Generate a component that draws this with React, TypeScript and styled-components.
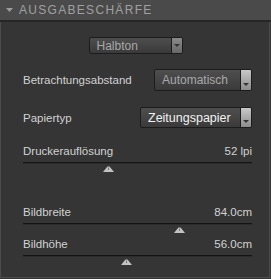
import React from 'react'
import styled, { createGlobalStyle } from 'styled-components'

const GlobalStyle = createGlobalStyle`
html, body {
    margin: 0;
    padding: 0;
    background: #353535;
}
`

const Panel = styled.div`
width: 271px;
height: 279px;
box-sizing: border-box;
background: #353535;
font-family: "Liberation Sans", Arial, sans-serif;
display: flex;
flex-direction: column;
overflow: hidden;
`

const Header = styled.div`
height: 20px;
background: #4a4a4a;
border-bottom: 2px solid #262626;
display: flex;
align-items: center;
padding-left: 6px;
gap: 6px;
`

const HeaderTitle = styled.span`
color: #a0a0a0;
font-size: 12px;
letter-spacing: 1.3px;
`

const Body = styled.div`
flex: 1;
border: 1px solid #4c4c4c;
border-top: none;
margin: 0 1px 1px 0;
padding: 15px 17px 0 22px;
display: flex;
flex-direction: column;
`

const Center = styled.div`
display: flex;
justify-content: center;
padding-right: 4px;
`

const Row = styled.div<{ mt: number }>`
display: flex;
align-items: center;
justify-content: space-between;
margin-top: ${p => p.mt}px;
`

const Label = styled.span`
color: #d2d2d2;
font-size: 11.5px;
`

const Select = styled.div<{ w: number; h: number }>`
width: ${p => p.w}px;
height: ${p => p.h}px;
box-sizing: border-box;
border: 1px solid #1c1c1c;
border-radius: 2px;
display: flex;
overflow: hidden;
background: linear-gradient(#4e4e4e, #3a3a3a);
`

const SelectText = styled.span<{ bright?: boolean }>`
flex: 1;
display: flex;
align-items: center;
padding-left: 7px;
color: ${p => (p.bright ? '#f2f2f2' : '#a8a8a8')};
font-size: ${p => (p.bright ? '12.5px' : '12px')};
`

const Arrow = styled.span<{ light?: boolean }>`
width: 11px;
border-left: 1px solid #1c1c1c;
background: ${p => (p.light ? 'linear-gradient(#c8c8c8, #8c8c8c)' : 'linear-gradient(#8a8a8a, #686868)')};
display: flex;
align-items: ${p => (p.light ? 'flex-end' : 'center')};
justify-content: center;
padding-bottom: ${p => (p.light ? '4px' : '0')};
box-sizing: border-box;
`

const ArrowGlyph = styled.span`
width: 0;
height: 0;
border-left: 3px solid transparent;
border-right: 3px solid transparent;
border-top: 3px solid #333;
`

const SliderBlock = styled.div<{ mt: number }>`
margin-top: ${p => p.mt}px;
display: flex;
flex-direction: column;
`

const SliderHead = styled.div`
display: flex;
justify-content: space-between;
align-items: baseline;
`

const Value = styled.span`
color: #d2d2d2;
font-size: 11.5px;
`

const Track = styled.div`
margin-top: 5px;
height: 1px;
background: #141414;
border-bottom: 1px solid #2c2c2c;
`

const ThumbRow = styled.div`
position: relative;
height: 8px;
`

const Thumb = styled.svg`
position: absolute;
top: 2px;
margin-left: -5px;
`

const Caret = () => (
    <svg width="7" height="4" viewBox="0 0 7 4">
        <path d="M0 0 L7 0 L3.5 4 Z" fill="#9c9c9c" />
    </svg>
)

const Slider: React.FC<{ label: string; value: string; pos: number; mt: number }> = ({ label, value, pos, mt }) => (
    <SliderBlock mt={mt}>
        <SliderHead>
            <Label>{label}</Label>
            <Value>{value}</Value>
        </SliderHead>
        <Track />
        <ThumbRow>
            <Thumb width="11" height="6" viewBox="0 0 11 6" style={{ left: `${pos}%` }}>
                <path d="M0 6 L4.5 0.5 L6.5 0.5 L11 6 Z" fill="#c2c2c2" />
                <path d="M5.5 1.5 L5.5 4" stroke="#777" strokeWidth="1" />
            </Thumb>
        </ThumbRow>
    </SliderBlock>
)

const App: React.FC = () => {
    return (
        <>
            <GlobalStyle />
            <Panel>
                <Header>
                    <Caret />
                    <HeaderTitle>AUSGABESCHÄRFE</HeaderTitle>
                </Header>
                <Body>
                    <Center>
                        <Select w={94} h={17}>
                            <SelectText>Halbton</SelectText>
                            <Arrow>
                                <ArrowGlyph />
                            </Arrow>
                        </Select>
                    </Center>
                    <Row mt={15}>
                        <Label>Betrachtungsabstand</Label>
                        <Select w={98} h={22}>
                            <SelectText>Automatisch</SelectText>
                            <Arrow light>
                                <ArrowGlyph />
                            </Arrow>
                        </Select>
                    </Row>
                    <Row mt={16}>
                        <Label>Papiertyp</Label>
                        <Select w={112} h={21}>
                            <SelectText bright>Zeitungspapier</SelectText>
                            <Arrow light>
                                <ArrowGlyph />
                            </Arrow>
                        </Select>
                    </Row>
                    <Slider label="Druckerauflösung" value="52 lpi" pos={37} mt={17} />
                    <Slider label="Bildbreite" value="84.0cm" pos={68} mt={34} />
                    <Slider label="Bildhöhe" value="56.0cm" pos={45} mt={5} />
                </Body>
            </Panel>
        </>
    )
}

export default App
